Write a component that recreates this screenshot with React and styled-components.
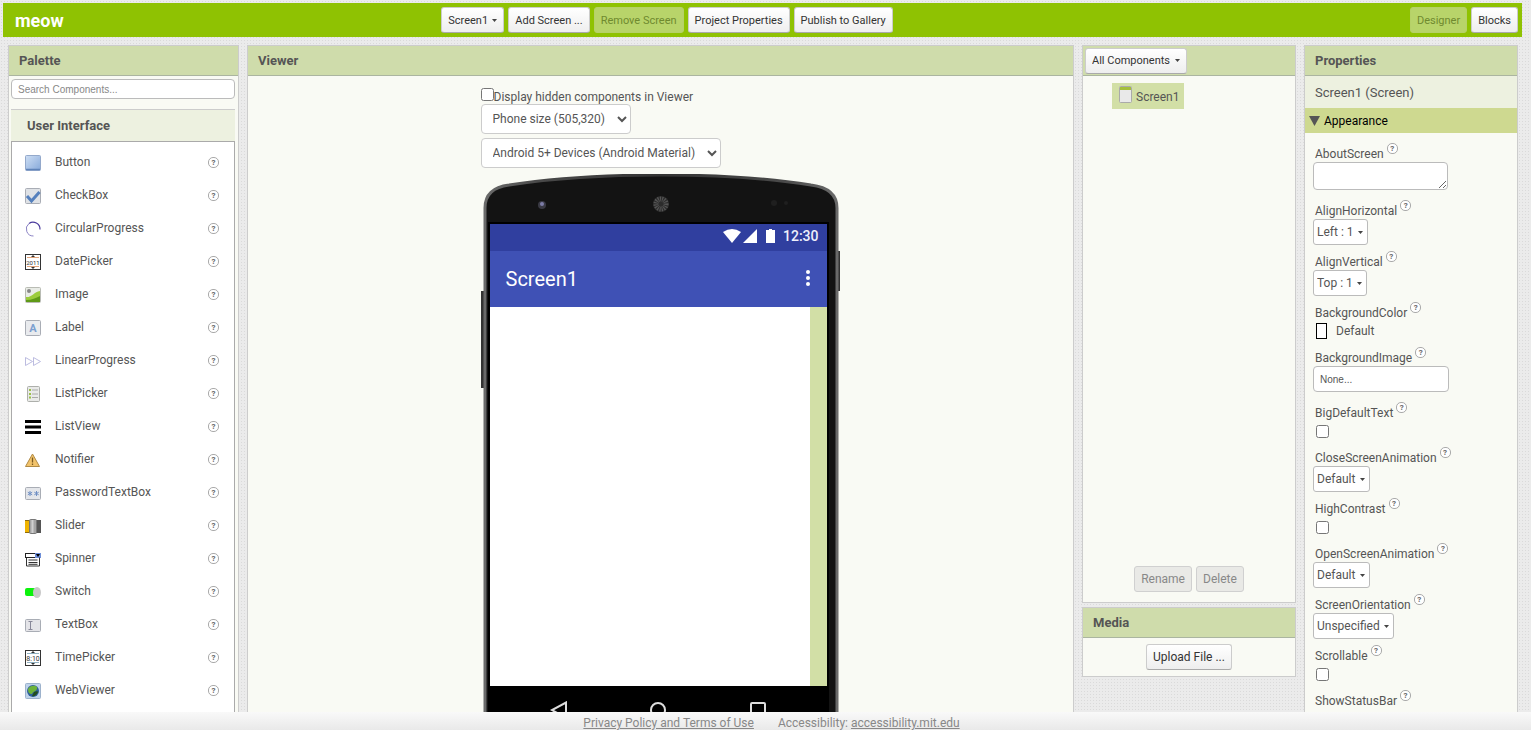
import { useState } from "react";
import styled, { createGlobalStyle } from "styled-components";

const caret = `url("data:image/svg+xml,%3Csvg xmlns='http://www.w3.org/2000/svg' width='5' height='3'%3E%3Cpath d='M0 0h5L2.5 3z' fill='%23444'/%3E%3C/svg%3E")`;

const GlobalStyle = createGlobalStyle`
*{
box-sizing:border-box;
}
body{
margin:0;
font-family:Roboto, "Liberation Sans", sans-serif;
font-size:12px;
color:#555;
}
button, input, select, textarea{
font-family:inherit;
color:inherit;
margin:0;
}
`;

const Page = styled.div`
height:100vh;
display:flex;
flex-direction:column;
overflow:hidden;
background-color:#ebebeb;
background-image:radial-gradient(#dadada 25%, transparent 45%);
background-size:3px 3px;
`;
const Toolbar = styled.header`
display:grid;
grid-template-columns:15fr auto 22fr;
align-items:center;
height:34px;
flex:none;
margin:3px 9px 8px 3px;
padding:0 4px 0 12px;
background-color:#8fc202;
`;
const ProjectName = styled.h1`
margin:0;
font-size:18px;
font-weight:700;
color:#fff;
`;
const ButtonGroup = styled.div`
display:flex;
gap:4px;
justify-content:${(props) => props.$align || "flex-start"};
`;
const Button = styled.button`
height:26px;
padding:0 6px;
font-size:${(props) => (props.$large ? "12px" : "11px")};
color:#333;
border:1px solid #ccc;
border-bottom-color:#aaa;
border-radius:3px;
background:linear-gradient(#fff, #eee);
white-space:nowrap;
cursor:pointer;

&:disabled{
color:#888;
border-color:#d0d0d0;
background:#e9e9e6;
cursor:default;
}
${Toolbar} &:disabled{
color:#6f8a2f;
border-color:#b6d169;
background:#b8d46a;
}
`;
const MenuSelect = styled.select`
appearance:none;
height:26px;
padding:0 15px 0 6px;
font-size:11px;
color:#333;
border:1px solid #ccc;
border-bottom-color:#aaa;
border-radius:3px;
background:${caret} no-repeat right 6px center, linear-gradient(#fff, #eee);
`;
const Columns = styled.main`
flex:1;
min-height:0;
display:flex;
gap:8px;
padding:0 13px 0 8px;
`;
const Panel = styled.section`
display:flex;
flex-direction:column;
flex:${(props) => (props.$grow ? "1" : "none")};
width:${(props) => props.$width};
min-width:0;
min-height:0;
overflow:hidden;
border:1px solid #ccc;
border-bottom-width:${(props) => (props.$open ? "0" : "1px")};
background-color:#f9faf4;
`;
const Side = styled.div`
width:214px;
flex:none;
display:flex;
flex-direction:column;
gap:4px;
`;
const PanelHeader = styled.div`
height:30px;
flex:none;
display:flex;
align-items:center;
padding:0 ${(props) => (props.$tight ? "2px" : "10px")};
border-bottom:1px solid #abb5a0;
background-color:#cfdcab;
`;
const PanelTitle = styled.h2`
margin:0;
font-size:13px;
font-weight:700;
color:#555;
`;

const PaletteBody = styled.div`
flex:1;
min-height:0;
display:flex;
flex-direction:column;
padding:3px 3px 0 2px;
`;
const Search = styled.input`
height:20px;
flex:none;
margin-bottom:10px;
padding:0 6px;
font-family:"Liberation Sans", Arial, sans-serif;
font-size:10px;
border:1px solid #bbb;
border-radius:4px;
background-color:#fff;

&::placeholder{
color:#888;
}
`;
const Category = styled.h3`
height:32px;
flex:none;
display:flex;
align-items:center;
margin:0;
padding-left:16px;
font-size:13px;
font-weight:700;
border-top:1px solid #ccc;
background-color:#edf1e0;
`;
const ComponentList = styled.ul`
flex:1;
min-height:0;
overflow:hidden;
list-style:none;
margin:0;
padding:4px 0 0;
border:1px solid #aaa;
border-bottom:0;
background-color:#fff;
`;
const ComponentItem = styled.li`
height:33px;
display:flex;
align-items:center;
padding:0 15px 0 12px;

svg{
width:18px;
height:18px;
margin-right:13px;
}
span{
flex:1;
padding-bottom:2px;
}
`;
const Help = styled.button`
width:11px;
height:11px;
flex:none;
display:flex;
align-items:center;
justify-content:center;
padding:0;
font-size:8px;
font-weight:700;
line-height:9px;
color:#666;
border:1px solid #aaa;
border-radius:5px;
background:#fff;
cursor:pointer;
`;

const ViewerBody = styled.div`
width:360px;
margin:0 auto;
padding-top:12px;
`;
const CheckLabel = styled.label`
display:flex;
height:16px;
line-height:18px;
white-space:nowrap;

input{
width:13px;
height:13px;
}
`;
const DeviceSelect = styled.select`
display:block;
height:30px;
margin-bottom:4px;
padding:0 8px 0 7px;
font-size:12px;
border:1px solid #ccc;
border-radius:4px;
background-color:#fff;
`;
const Phone = styled.div`
position:relative;
height:620px;
margin-top:6px;
padding:50px 14px 0 9px;
`;
const PhoneFrame = styled.svg`
position:absolute;
top:0;
left:0;
width:360px;
height:620px;
`;
const Screen = styled.div`
position:relative;
`;
const StatusBar = styled.div`
height:27px;
display:flex;
align-items:center;
justify-content:flex-end;
padding:0 8px 3px 0;
font-size:14px;
font-weight:500;
color:#eef0fb;
background-color:#303f9f;

svg{
margin-right:6px;
}
`;
const AppBar = styled.div`
height:56px;
display:flex;
align-items:center;
justify-content:space-between;
padding:0 16px;
font-size:20px;
color:#fff;
background-color:#3f51b5;
`;
const Canvas = styled.div`
height:379px;
border-right:17px solid #d2dfa6;
background-color:#fff;
`;
const NavBar = styled.div`
height:60px;
display:flex;
justify-content:space-between;
padding:15px 59px 0;
background-color:#000;
`;

const Tree = styled.div`
height:485px;
padding:7px 0 0 29px;
`;
const TreeItem = styled.div`
width:72px;
height:26px;
display:flex;
gap:4px;
padding:3px 4px 0 7px;
background-color:#d2dfa6;

span{
line-height:23px;
}
`;
const Actions = styled.div`
display:flex;
justify-content:center;
gap:4px;
padding:${(props) => props.$pad};
`;

const TypeName = styled.div`
height:32px;
flex:none;
line-height:34px;
padding-left:10px;
font-size:13px;
background-color:#edf1e0;
`;
const Group = styled.button`
height:25px;
flex:none;
display:flex;
align-items:center;
gap:4px;
padding:0 4px;
font-size:12px;
color:#000;
border:0;
background-color:#ced990;
`;
const PropertyList = styled.div`
padding:11px 8px 0;
`;
const LabelRow = styled.div`
height:18px;
display:flex;
gap:3px;
padding-left:2px;
line-height:20px;

${Help}{
margin-top:-1px;
}
`;
const TextArea = styled.textarea`
display:block;
width:135px;
height:28px;
margin-bottom:11px;
border:1px solid #bbb;
border-radius:4px;
background-color:#fff;
`;
const ImageInput = styled.input`
display:block;
width:136px;
height:26px;
margin-bottom:11px;
padding:0 6px;
font-family:"Liberation Sans", Arial, sans-serif;
font-size:10px;
border:1px solid #bbb;
border-radius:4px;
background-color:#fff;
`;
const PropertySelect = styled.select`
appearance:none;
display:block;
height:26px;
margin-bottom:7px;
padding:0 13px 0 3px;
font-size:12px;
border:1px solid #bbb;
border-radius:3px;
background:#fff ${caret} no-repeat right 4px center;
`;
const Check = styled.input`
display:block;
width:13px;
height:13px;
&&{
margin:4px 0 10px 3px;
}
`;
const ColorButton = styled.button`
display:flex;
align-items:center;
gap:9px;
height:16px;
&&{
margin:2px 0 9px 3px;
}
padding:0;
font-size:12px;
border:0;
background:none;
`;
const Swatch = styled.span`
width:11px;
height:16px;
border:1px solid #000;
background-color:#fff;
`;

const Footer = styled.footer`
height:18px;
flex:none;
display:flex;
align-items:center;
justify-content:center;
gap:24px;
padding:4px 0 0 12px;
color:#888;
background:linear-gradient(#f9f9f9, #e9e9e9);
overflow:hidden;

a{
color:#888;
}
`;

const Box = ({ fill = "#e4e6ea", stroke = "#a9adb5", y = 1, h = 16 }) => (
    <rect x="1.5" y={y + 0.5} width="15" height={h - 1} rx="1" fill={fill} stroke={stroke} />
);

const icons = {
    Button: (
        <>
            <defs>
                <linearGradient id="btn" x1="0" y1="0" x2="1" y2="1">
                    <stop offset="0" stopColor="#cfdff4" />
                    <stop offset="1" stopColor="#86a9da" />
                </linearGradient>
            </defs>
            <Box fill="url(#btn)" stroke="#94a9cb" />
            <path d="M2 15.500h14" stroke="#5f83b8" strokeWidth="1.500" />
        </>
    ),
    CheckBox: (
        <>
            <Box fill="#dfe2e6" />
            <path d="M3 9L7.500 14L15.500 5" fill="none" stroke="#5580bd" strokeWidth="3" />
        </>
    ),
    CircularProgress: (
        <>
            <path d="M5 3.500A7 7 0 0 1 16 9.500" fill="none" stroke="#4a3a9c" strokeWidth="1.200" />
            <path d="M5 3.500A7 7 0 0 0 9.500 16" fill="none" stroke="#8a82c4" />
        </>
    ),
    DatePicker: (
        <>
            <rect x="1.500" y="1.500" width="15" height="15" fill="#fff" stroke="#333" />
            <path d="M3 4.500h12M3 13.500h12" stroke="#e0a37a" />
            <path d="M7 4l2-2 2 2zM7 14l2 2 2-2z" fill="#333" />
            <text x="9" y="12" fontSize="6" textAnchor="middle" fill="#333">2011</text>
        </>
    ),
    Image: (
        <>
            <Box fill="#e9ece6" stroke="#b9bcb4" />
            <path d="M2 11C7 12 10 6 16 5V16H2z" fill="#9ccc3c" />
            <path d="M2 14C8 14 12 12 16 10V16H2z" fill="#5f9a17" />
            <circle cx="5" cy="5" r="2" fill="#888" />
        </>
    ),
    Label: (
        <>
            <Box fill="#e9ebee" />
            <text x="9" y="13" fontSize="11" fontWeight="700" textAnchor="middle" fill="#7b9fd0">A</text>
        </>
    ),
    LinearProgress: <path d="M1.500 5.500v8l7-4zM9.500 5.500v8l7-4z" fill="none" stroke="#b4b4dc" strokeWidth="0.900" />,
    ListPicker: (
        <>
            <rect x="3.500" y="1.500" width="12" height="15" rx="1" fill="#e9eae8" stroke="#adafab" />
            <path d="M5 5h2M5 9h2M5 12.500h2" stroke="#9bbf4a" strokeWidth="2" />
            <path d="M8 5h6M8 9h6M8 12.500h6" stroke="#aaa" />
        </>
    ),
    ListView: <path d="M1 3.500h16M1 9h16M1 14.500h16" stroke="#000" strokeWidth="3" />,
    Notifier: (
        <>
            <path d="M8.500 3L15.500 15.500H1.500z" fill="#f2c36b" stroke="#b08a45" />
            <path d="M8.500 6.500v5M8.500 12.500v1.500" stroke="#7a5a20" strokeWidth="1.300" />
        </>
    ),
    PasswordTextBox: (
        <>
            <Box y={3} h={13} />
            <path d="M6 7v5M3.800 8.200l4.400 2.600M8.200 8.200l-4.400 2.600M12.500 7v5M10.300 8.200l4.400 2.600M14.700 8.200l-4.400 2.600" stroke="#6f8fc4" />
        </>
    ),
    Slider: (
        <>
            <rect x="1" y="3" width="5" height="13" fill="#f0b400" />
            <rect x="11" y="3" width="6" height="13" fill="#555" />
            <path d="M1 3.500h4M1 15.500h4" stroke="#8a6a10" />
            <rect x="5.500" y="2.500" width="7" height="14" rx="1" fill="#a5a5a5" stroke="#777" />
            <path d="M8.500 3v13" stroke="#d0d0d0" strokeWidth="2" />
        </>
    ),
    Spinner: (
        <>
            <rect x="1.500" y="3.500" width="15" height="4" fill="#fff" stroke="#222" />
            <rect x="11" y="3" width="6" height="5" fill="#6f8fd8" />
            <path d="M12 4h4l-2 3z" fill="#000" />
            <path d="M2.500 7.500v8.500h13V7.500M4.500 10h9M4.500 12.500h9M4.500 14.300h9" fill="none" stroke="#333" />
        </>
    ),
    Switch: (
        <>
            <rect x="1" y="5" width="13" height="8" rx="2" fill="#0cf20c" />
            <ellipse cx="13" cy="9.500" rx="4" ry="5.500" fill="#c9c9c9" />
        </>
    ),
    TextBox: (
        <>
            <Box y={3} h={13} fill="#e4e4e8" />
            <path d="M4.500 5.500h4M4.500 13.500h4M6.500 5.500v8" stroke="#888899" />
        </>
    ),
    TimePicker: (
        <>
            <rect x="1.500" y="1.500" width="15" height="15" fill="#fff" stroke="#333" />
            <path d="M3 4.500h12M3 13.500h12" stroke="#8fb0c0" />
            <path d="M7 4l2-2 2 2zM7 14l2 2 2-2z" fill="#333" />
            <text x="9" y="12" fontSize="7" textAnchor="middle" fill="#333">8:10</text>
        </>
    ),
    WebViewer: (
        <>
            <Box fill="#bfd3ea" stroke="#9db2cc" />
            <circle cx="9" cy="9" r="6" fill="#2f5f9a" />
            <path d="M4 7C6 3 11 3 13 5C14 9 9 9 8 12C5 12 4 10 4 7z" fill="#6db33a" />
            <path d="M10 10c2-1 4-1 4 0c-1 3-4 5-6 4z" fill="#244f1c" />
        </>
    ),
};

const properties = [
    { name: "AboutScreen", kind: "area" },
    { name: "AlignHorizontal", kind: "select", value: "Left : 1" },
    { name: "AlignVertical", kind: "select", value: "Top : 1" },
    { name: "BackgroundColor", kind: "color", value: "Default" },
    { name: "BackgroundImage", kind: "image", value: "None..." },
    { name: "BigDefaultText", kind: "check" },
    { name: "CloseScreenAnimation", kind: "select", value: "Default" },
    { name: "HighContrast", kind: "check" },
    { name: "OpenScreenAnimation", kind: "select", value: "Default" },
    { name: "ScreenOrientation", kind: "select", value: "Unspecified" },
    { name: "Scrollable", kind: "check" },
    { name: "ShowStatusBar", kind: "check" },
];

const HelpButton = ({ name }) => <Help type="button" aria-label={"Help for " + name}>?</Help>;

const PropertyControl = ({ id, kind, value }) => {
    if (kind === "area") return <TextArea id={id} />;
    if (kind === "select") return <PropertySelect id={id}><option>{value}</option></PropertySelect>;
    if (kind === "image") return <ImageInput id={id} defaultValue={value} />;
    if (kind === "check") return <Check id={id} type="checkbox" />;
    return <ColorButton id={id} type="button"><Swatch />{value}</ColorButton>;
};

const PalettePanel = () => {
    const [query, setQuery] = useState("");
    const names = Object.keys(icons).filter((name) => name.toLowerCase().includes(query.toLowerCase()));
    return (
        <Panel $width="231px" $open>
            <PanelHeader><PanelTitle>Palette</PanelTitle></PanelHeader>
            <PaletteBody>
                <Search
                    aria-label="Search Components"
                    placeholder="Search Components..."
                    value={query}
                    onChange={(e) => setQuery(e.target.value)}
                />
                <Category>User Interface</Category>
                <ComponentList>
                    {names.map((name) => (
                        <ComponentItem key={name}>
                            <svg viewBox="0 0 18 18">{icons[name]}</svg>
                            <span>{name}</span>
                            <HelpButton name={name} />
                        </ComponentItem>
                    ))}
                </ComponentList>
            </PaletteBody>
        </Panel>
    );
};

const PhonePreview = () => (
    <Phone>
        <PhoneFrame viewBox="0 0 360 620">
            <defs>
                <linearGradient id="rim" x1="0" y1="0" x2="1" y2="0">
                    <stop offset="0" stopColor="#6a6a6a" />
                    <stop offset="0.15" stopColor="#4a4a4a" />
                    <stop offset="0.5" stopColor="#333" />
                    <stop offset="0.85" stopColor="#4a4a4a" />
                    <stop offset="1" stopColor="#6a6a6a" />
                </linearGradient>
            </defs>
            <rect x="0" y="117" width="4" height="97" fill="#333" />
            <rect x="355" y="77" width="4" height="40" fill="#333" />
            <path d="M4 620V34C4 20 12 13 28 11C80 3 130 1 180 1C230 1 280 3 330 11C346 13 356 20 356 34V620" fill="#131313" stroke="url(#rim)" strokeWidth="3" />
            <path d="M7 620V48H348V620z" fill="#000" />
            <circle cx="61" cy="31" r="4" fill="#3a3a44" />
            <circle cx="61" cy="30" r="2" fill="#7d7da8" />
            <circle cx="180" cy="30" r="8" fill="#2c2c2c" />
            <circle cx="180" cy="30" r="5" fill="none" stroke="#555" strokeDasharray="1 1" strokeWidth="5" />
            <circle cx="293" cy="29" r="3" fill="#1f1f1f" />
            <circle cx="305" cy="29" r="2" fill="#1f1f1f" />
        </PhoneFrame>
        <Screen>
            <StatusBar>
                <svg width="54" height="16" viewBox="0 0 54 16" fill="#fff">
                    <path d="M0 4Q9 -2 18 4L9 15z" />
                    <path d="M34 1V15H20z" />
                    <path d="M43 2h3V1h3v1h3v13h-9z" />
                </svg>
                12:30
            </StatusBar>
            <AppBar>
                Screen1
                <svg width="6" height="18" viewBox="0 0 6 18" fill="#fff">
                    <circle cx="3" cy="2" r="2" />
                    <circle cx="3" cy="8" r="2" />
                    <circle cx="3" cy="14" r="2" />
                </svg>
            </AppBar>
            <Canvas />
            <NavBar>
                <svg width="20" height="20" viewBox="0 0 20 20" fill="none" stroke="#ddd" strokeWidth="2">
                    <path d="M17 1.500V17L3 9z" />
                </svg>
                <svg width="20" height="20" viewBox="0 0 20 20" fill="none" stroke="#ddd" strokeWidth="2">
                    <circle cx="10" cy="9" r="7" />
                </svg>
                <svg width="20" height="20" viewBox="0 0 20 20" fill="none" stroke="#ddd" strokeWidth="2">
                    <rect x="3" y="2" width="14" height="14" rx="1" />
                </svg>
            </NavBar>
        </Screen>
    </Phone>
);

const App = () => {
    return (
        <Page>
            <GlobalStyle />
            <Toolbar>
                <ProjectName>meow</ProjectName>
                <ButtonGroup>
                    <MenuSelect aria-label="Screen"><option>Screen1</option></MenuSelect>
                    <Button>Add Screen ...</Button>
                    <Button disabled>Remove Screen</Button>
                    <Button>Project Properties</Button>
                    <Button>Publish to Gallery</Button>
                </ButtonGroup>
                <ButtonGroup $align="flex-end">
                    <Button disabled>Designer</Button>
                    <Button>Blocks</Button>
                </ButtonGroup>
            </Toolbar>
            <Columns>
                <PalettePanel />
                <Panel $grow $open>
                    <PanelHeader><PanelTitle>Viewer</PanelTitle></PanelHeader>
                    <ViewerBody>
                        <CheckLabel><input type="checkbox" />Display hidden components in Viewer</CheckLabel>
                        <DeviceSelect aria-label="Screen size"><option>Phone size (505,320)</option></DeviceSelect>
                        <DeviceSelect aria-label="Device theme"><option>Android 5+ Devices (Android Material)</option></DeviceSelect>
                        <PhonePreview />
                    </ViewerBody>
                </Panel>
                <Side>
                    <Panel>
                        <PanelHeader $tight>
                            <MenuSelect aria-label="Component filter"><option>All Components</option></MenuSelect>
                        </PanelHeader>
                        <Tree>
                            <TreeItem>
                                <svg width="13" height="17" viewBox="0 0 13 17">
                                    <rect x="0.500" y="0.500" width="12" height="16" rx="1" fill="#e9e9e9" stroke="#aaa" />
                                    <path d="M1 2.500h11" stroke="#a4bf3c" strokeWidth="3" />
                                </svg>
                                <span>Screen1</span>
                            </TreeItem>
                        </Tree>
                        <Actions $pad="5px 0 10px">
                            <Button $large disabled>Rename</Button>
                            <Button $large disabled>Delete</Button>
                        </Actions>
                    </Panel>
                    <Panel>
                        <PanelHeader><PanelTitle>Media</PanelTitle></PanelHeader>
                        <Actions $pad="6px 0">
                            <Button $large>Upload File ...</Button>
                        </Actions>
                    </Panel>
                </Side>
                <Panel $width="214px" $open>
                    <PanelHeader><PanelTitle>Properties</PanelTitle></PanelHeader>
                    <TypeName>Screen1 (Screen)</TypeName>
                    <Group type="button">
                        <svg width="11" height="10" viewBox="0 0 11 10"><path d="M0 0h11L5.500 10z" fill="#555" /></svg>
                        Appearance
                    </Group>
                    <PropertyList>
                        {properties.map(({ name, kind, value }) => (
                            <div key={name}>
                                <LabelRow>
                                    <label htmlFor={name}>{name}</label>
                                    <HelpButton name={name} />
                                </LabelRow>
                                <PropertyControl id={name} kind={kind} value={value} />
                            </div>
                        ))}
                    </PropertyList>
                </Panel>
            </Columns>
            <Footer>
                <a href="#privacy">Privacy Policy and Terms of Use</a>
                <span>Accessibility: <a href="#accessibility">accessibility.mit.edu</a></span>
            </Footer>
        </Page>
    );
};

export default App;
